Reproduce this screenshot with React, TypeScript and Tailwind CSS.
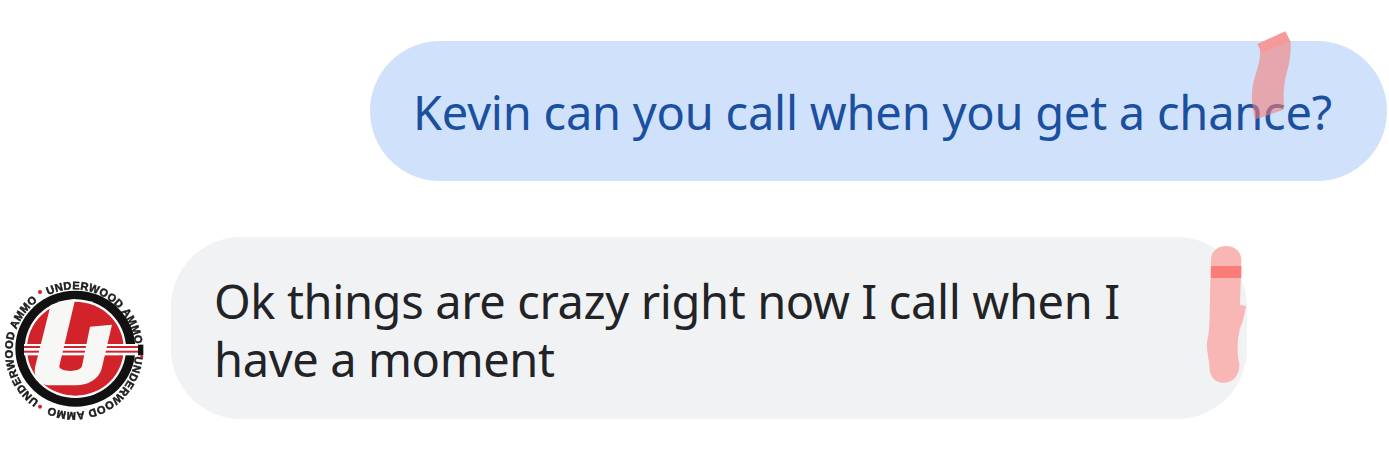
const ringPath = "M144.2,105.2 A184,184 0 1 1 299.8,438.8 A184,184 0 1 1 144.2,105.2";

function UnderwoodLogo() {
  return (
    <svg viewBox="0 0 480 510" className="mt-[23px] h-[170px] w-[160px] shrink-0 blur-[0.4px]">
      <defs>
        <path id="ring" d={ringPath} />
      </defs>
      <ellipse cx="226" cy="266" rx="180" ry="174" fill="#111" />
      <ellipse cx="226" cy="266" rx="152" ry="148" fill="#fff" />
      <ellipse cx="226" cy="266" rx="145" ry="141" fill="#d2232a" />
      {/* stripes across the disc */}
      <rect x="72" y="252" width="345" height="34" fill="#fff" />
      <rect x="72" y="258" width="345" height="6" fill="#d2232a" />
      <rect x="72" y="272" width="345" height="6" fill="#d2232a" />
      <rect x="414" y="254" width="16" height="32" fill="#111" />
      <path
        d="M152,135 L226,116 L178,318 C174,335 240,340 246,318 L270,200 L336,194 L306,322 C298,360 262,376 225,376 L150,376 C118,376 98,350 106,318 Z"
        fill="#f7f7f5"
      />
      {[0, 385, 770].map((offset) => (
        <text
          key={offset}
          fontFamily="'Liberation Sans', sans-serif"
          fontWeight="700"
          fontSize="33"
          fill="#1c1c1c"
          stroke="#1c1c1c"
          strokeWidth="1.5"
        >
          <textPath href="#ring" startOffset={offset} textLength="350" lengthAdjust="spacing">
            UNDERWOOD AMMO
          </textPath>
        </text>
      ))}
      <circle cx="120" cy="96" r="6" fill="#d2232a" />
      <circle cx="120" cy="440" r="6" fill="#d2232a" />
      <circle cx="425" cy="290" r="5" fill="#d2232a" />
    </svg>
  );
}

function TopMark() {
  return (
    <svg viewBox="0 0 507 420" className="absolute left-[850px] top-[-21px] h-[140px] w-[169px]">
      <path
        d="M118,78 L212,65 C214,100 208,130 200,160 C190,195 190,230 192,268 C165,280 130,290 105,298 C95,260 92,220 102,180 C112,145 125,115 118,78 Z"
        fill="#f57e7b"
        fillOpacity="0.6"
      />
      <path d="M112,72 L196,34 L212,65 L126,98 Z" fill="#f59a98" />
    </svg>
  );
}

function BottomMark() {
  return (
    <svg viewBox="0 0 300 510" className="absolute left-[1009px] top-[-7px] h-[170px] w-[100px]">
      <path
        d="M93,90 C93,65 112,48 138,48 C165,48 184,65 184,90 L180,225 L198,228 C194,250 188,280 180,295 C172,330 170,370 178,400 C180,435 160,458 130,458 C104,458 88,438 88,410 C88,385 76,355 82,330 C92,300 88,200 93,90 Z"
        fill="#f8b7b5"
      />
      <rect x="93" y="108" width="91" height="36" fill="#fc7d78" />
    </svg>
  );
}

export default function App() {
  return (
    <div className="h-[469px] w-[1389px] overflow-hidden bg-white pt-[41px] font-['Noto_Sans','Open_Sans',sans-serif]">
      <div className="flex justify-end pr-[2px]">
        <div className="relative h-[140px] w-[1017px] rounded-[70px] bg-[#d0e2fb] pl-[43px] pt-[39px] text-[47px] leading-[64px] tracking-[-0.23px] text-[#1b4f9f]">
          Kevin can you call when you get a chance?
          <TopMark />
        </div>
      </div>
      <div className="mt-[56px] flex items-start gap-[11px]">
        <UnderwoodLogo />
        <div className="relative h-[182px] w-[1076px] rounded-[70px] bg-[#f1f2f4] pl-[43px] pt-[35px] text-[47px] leading-[58px] tracking-[-0.37px] text-[#222326]">
          <div>Ok things are crazy right now I call when I</div>
          <div>have a moment</div>
          <BottomMark />
        </div>
      </div>
    </div>
  );
}
